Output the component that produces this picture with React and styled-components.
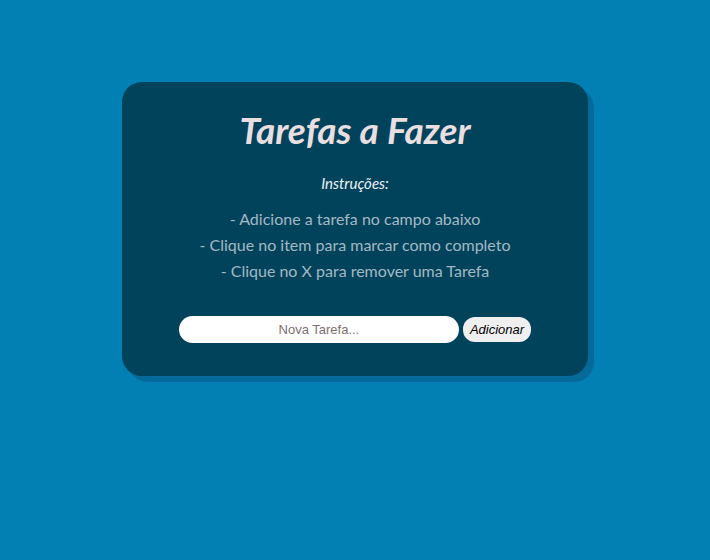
import React from "react";
import styled, { createGlobalStyle } from "styled-components";

const GlobalStyle = createGlobalStyle`
  html, body {
    margin: 0;
    padding: 0;
    background-color: #0380b3;
    height: 100%;
  }
  body {
    font-family: Lato, "Open Sans", sans-serif;
  }
`;

const Page = styled.div`
  display: flex;
  justify-content: center;
  padding-top: 82px;
  min-height: 560px;
  box-sizing: border-box;
`;

const Card = styled.div`
  width: 466px;
  height: 294px;
  box-sizing: border-box;
  background-color: #02435c;
  border-radius: 20px;
  box-shadow: 6px 6px 0 #05699a;
  display: flex;
  flex-direction: column;
  align-items: center;
  padding-top: 25px;
`;

const Title = styled.h1`
  margin: 0;
  font-size: 37px;
  font-weight: 700;
  font-style: italic;
  color: #e9dfe0;
`;

const Subtitle = styled.p`
  margin: 22px 0 0;
  font-size: 15px;
  font-style: italic;
  color: #eef2f4;
`;

const Steps = styled.ul`
  list-style: none;
  margin: 14px 0 0;
  padding: 0;
  text-align: center;
`;

const Step = styled.li`
  font-size: 16px;
  line-height: 26px;
  color: #a4b8c3;
`;

const Form = styled.form`
  display: flex;
  align-items: center;
  gap: 4px;
  margin-top: 32px;
`;

const Input = styled.input`
  width: 280px;
  height: 27px;
  box-sizing: border-box;
  border: none;
  border-radius: 14px;
  background: #fff;
  text-align: center;
  font-family: "Liberation Sans", Arial, sans-serif;
  font-size: 13px;
  outline: none;
  &::placeholder {
    color: #7b6f6f;
  }
`;

const Button = styled.button`
  height: 25px;
  padding: 0 7px;
  border: none;
  border-radius: 12px;
  background: #efefef;
  font-family: "Liberation Sans", Arial, sans-serif;
  font-size: 13px;
  font-style: italic;
  color: #000;
  cursor: pointer;
`;

export default function App() {
  return (
    <>
      <GlobalStyle />
      <Page>
        <Card>
          <Title>Tarefas a Fazer</Title>
          <Subtitle>Instruções:</Subtitle>
          <Steps>
            <Step>- Adicione a tarefa no campo abaixo</Step>
            <Step>- Clique no item para marcar como completo</Step>
            <Step>- Clique no X para remover uma Tarefa</Step>
          </Steps>
          <Form onSubmit={(e) => e.preventDefault()}>
            <Input placeholder="Nova Tarefa..." />
            <Button type="submit">Adicionar</Button>
          </Form>
        </Card>
      </Page>
    </>
  );
}
